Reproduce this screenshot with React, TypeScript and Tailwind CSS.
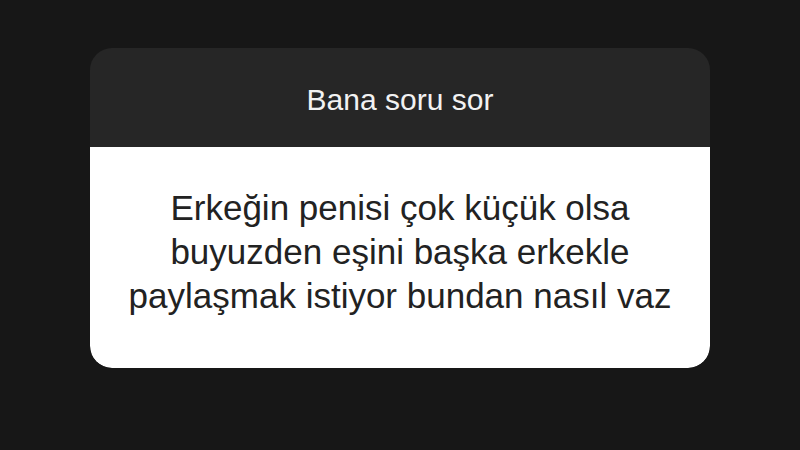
import React from 'react';

export default function App() {
  return (
    <div className="w-[800px] h-[450px] bg-[#171717] flex flex-col items-center pt-[48px]" style={{ fontFamily: '"Liberation Sans", Arial, sans-serif' }}>
      <div className="w-[620px] rounded-[22px] overflow-hidden bg-[#262626]">
        <div className="h-[99px] flex items-center justify-center pt-[3px] text-[30px] text-[#f2f2f2]">
          Bana soru sor
        </div>
        <div className="h-[221px] bg-white rounded-b-[22px] flex items-center justify-center text-center text-[35px] leading-[44px] text-[#222222] pb-[12px]">
          <p>
            Erkeğin penisi çok küçük olsa
            <br />
            buyuzden eşini başka erkekle
            <br />
            paylaşmak istiyor bundan nasıl vaz
          </p>
        </div>
      </div>
    </div>
  );
}
